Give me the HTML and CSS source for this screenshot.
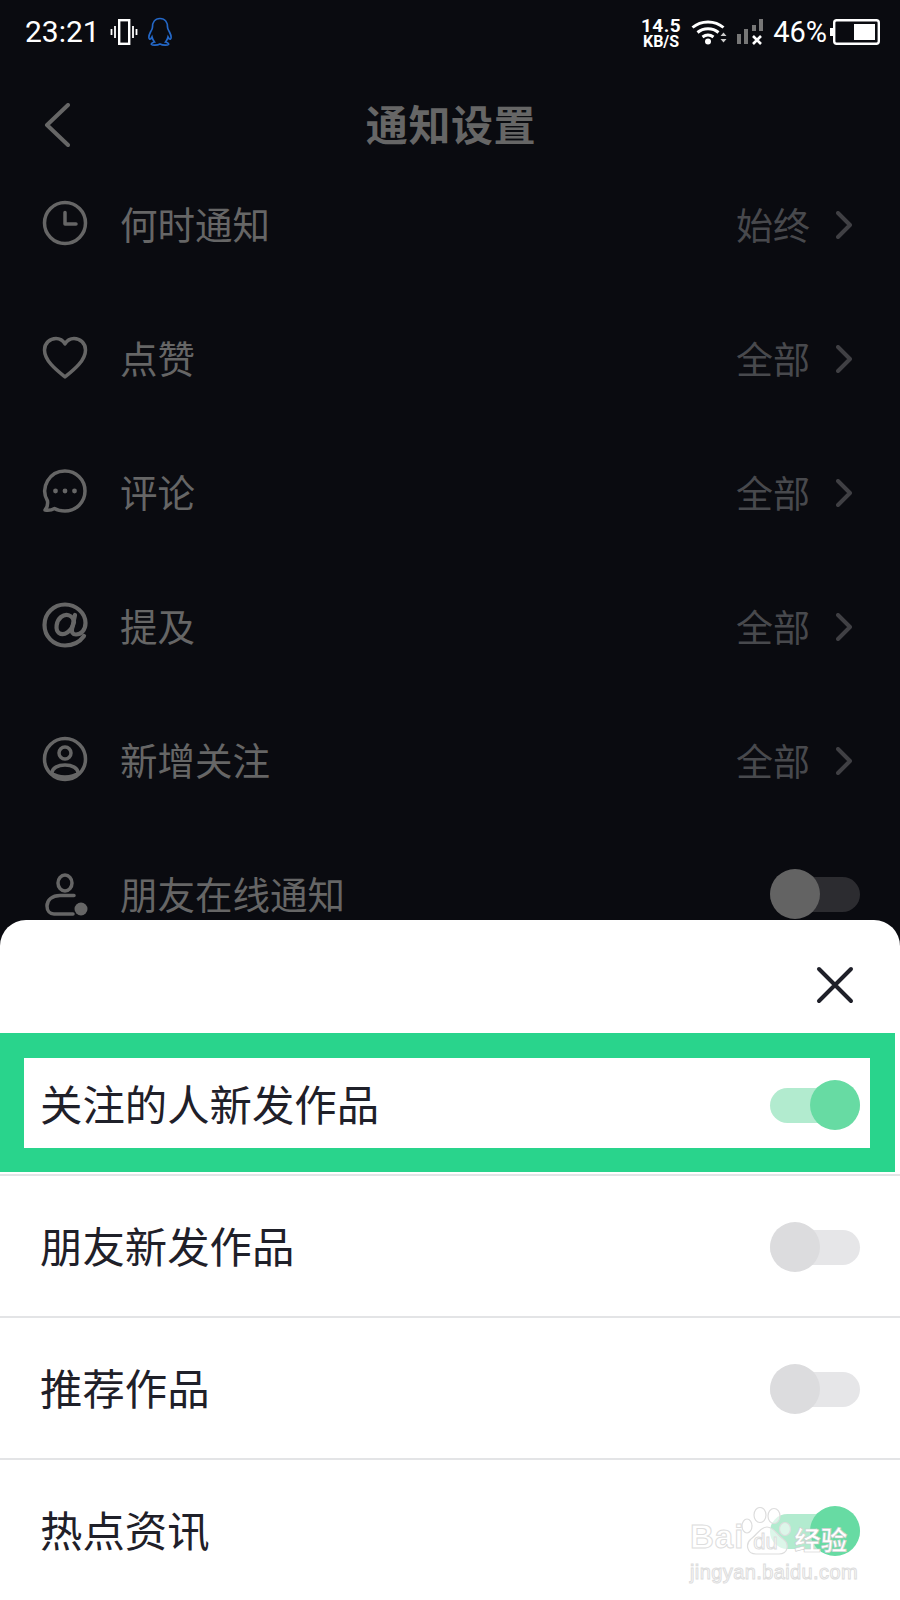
FILE: index.html
```html
<!DOCTYPE html>
<html lang="zh-CN">
<head>
  <meta charset="UTF-8" />
  <meta name="viewport" content="width=device-width, initial-scale=1.0" />
  <title>通知设置</title>
  <link rel="stylesheet" href="styles.css">
</head>
<body>

  <div class="statusbar">
    <div class="status-left">
      <span class="time">23:21</span>
      <svg class="ic-vibrate" width="28" height="26" viewBox="0 0 28 26"><rect x="9.2" y="1.2" width="10" height="23.6" fill="none" stroke="#fff" stroke-width="2.4"/><path d="M5 7v12M1.500 10v6M23 7v12M26.500 10v6" stroke="#fff" stroke-width="1.800"/></svg>
      <svg class="ic-qq" width="26" height="30" viewBox="0 0 26 30"><path d="M13 1.500C7.500 1.500 5.500 6 5.500 10C5.500 12 4.500 13 3.500 15C2 18 1.500 21 2.500 22C3.500 22.500 4.500 21 5 20C5.500 22 6.500 24 7.500 25C5.500 25.500 4 26.500 4.500 27.500C5.500 28.500 10 28.500 13 27C16 28.500 20.500 28.500 21.500 27.500C22 26.500 20.500 25.500 18.500 25C19.500 24 20.500 22 21 20C21.500 21 22.500 22.500 23.500 22C24.500 21 24 18 22.500 15C21.500 13 20.500 12 20.500 10C20.500 6 18.500 1.500 13 1.500Z" fill="none" stroke="#2468c8" stroke-width="1.700"/></svg>
    </div>
    <div class="status-right">
      <div class="speed"><span>14.5</span><span class="speed-unit">KB/S</span></div>
      <svg class="ic-wifi" width="36" height="26" viewBox="0 0 36 26"><path d="M1.500 8.500C10 1 24 1 32.500 8.500M6.500 13.500C12.500 8.500 21.500 8.500 27.500 13.500M11.500 18C14.800 15.500 19.200 15.500 22.500 18" fill="none" stroke="#fff" stroke-width="3"/><circle cx="17" cy="22.500" r="3" fill="#fff"/><path d="M29.500 17h6l-3-3.500zM29.500 20h6l-3 3.500z" fill="#ccc"/></svg>
      <svg class="ic-signal" width="27" height="26" viewBox="0 0 27 26"><path d="M1 15h4v10H1zM8 10h4v15H8zM16 6h4v6h-4zM23 0h4v12h-4z" fill="#777"/><path d="M17 17l8 8M25 17l-8 8" stroke="#fff" stroke-width="2.600"/></svg>
      <span class="percent">46%</span>
      <svg class="ic-battery" width="50" height="26" viewBox="0 0 50 26"><path d="M0 9h3v8H0z" fill="#fff"/><rect x="4.200" y="1.200" width="44.600" height="23.600" rx="2.500" fill="none" stroke="#fff" stroke-width="2.400"/><rect x="24" y="5" width="21" height="16" fill="#fff"/></svg>
    </div>
  </div>

  <header class="nav">
    <svg class="nav-back" width="26" height="44" viewBox="0 0 26 44"><path d="M24 2L3 22l21 20" fill="none" stroke="#666" stroke-width="4" stroke-linecap="round" stroke-linejoin="round"/></svg>
    <h1>通知设置</h1>
  </header>

  <ul class="settings">
    <li class="setting">
      <svg class="setting-icon" viewBox="0 0 48 48"><circle cx="24" cy="24" r="20.500"/><path d="M24 13.500V25h11"/></svg>
      <span class="setting-name">何时通知</span>
      <span class="setting-value">始终</span>
      <svg class="chevron" width="16" height="28" viewBox="0 0 16 28"><path d="M2 2l12 12L2 26"/></svg>
    </li>
    <li class="setting">
      <svg class="setting-icon" viewBox="0 0 48 48"><path d="M24 44C16 37.500 3.500 28 3.500 17C3.500 10 9 5.500 15 5.500C19 5.500 22 7.500 24 11C26 7.500 29 5.500 33 5.500C39 5.500 44.500 10 44.500 17C44.500 28 32 37.500 24 44Z"/></svg>
      <span class="setting-name">点赞</span>
      <span class="setting-value">全部</span>
      <svg class="chevron" width="16" height="28" viewBox="0 0 16 28"><path d="M2 2l12 12L2 26"/></svg>
    </li>
    <li class="setting">
      <svg class="setting-icon" viewBox="0 0 48 48"><path d="M24 4A20 20 0 1 1 24 44C20 44 16 43 13.500 41.500C10 43.500 7 43.500 4 43C6 41 7 38 6.500 34A20 20 0 0 1 24 4Z"/><circle class="dot" cx="14.500" cy="24" r="2.400"/><circle class="dot" cx="24" cy="24" r="2.400"/><circle class="dot" cx="33.500" cy="24" r="2.400"/></svg>
      <span class="setting-name">评论</span>
      <span class="setting-value">全部</span>
      <svg class="chevron" width="16" height="28" viewBox="0 0 16 28"><path d="M2 2l12 12L2 26"/></svg>
    </li>
    <li class="setting">
      <svg class="setting-icon icon-at" viewBox="0 0 48 48"><path d="M43 35C38 42 31 44.500 24 44.500C12 44.500 3.500 35 3.500 24C3.500 12 13 3.500 24 3.500C35 3.500 44.500 12 44.500 22C44.500 29 40 33.500 35 33.500C31.500 33.500 30.500 31 31 28L34 14"/><path d="M33 21C32 14 25 12 20 16C15 20 14 29 18 32C23 35.500 31 30 33 21Z"/></svg>
      <span class="setting-name">提及</span>
      <span class="setting-value">全部</span>
      <svg class="chevron" width="16" height="28" viewBox="0 0 16 28"><path d="M2 2l12 12L2 26"/></svg>
    </li>
    <li class="setting">
      <svg class="setting-icon" viewBox="0 0 48 48"><circle cx="24" cy="24" r="20.500"/><circle cx="24" cy="18" r="6"/><path d="M11 38C11 33 17 30 24 30C31 30 37 33 37 38C34 41 30 42 24 42C18 42 14 41 11 38Z"/></svg>
      <span class="setting-name">新增关注</span>
      <span class="setting-value">全部</span>
      <svg class="chevron" width="16" height="28" viewBox="0 0 16 28"><path d="M2 2l12 12L2 26"/></svg>
    </li>
    <li class="setting">
      <svg class="setting-icon" viewBox="0 0 48 48"><ellipse cx="24" cy="14" rx="7" ry="8"/><path d="M33 26.500H19C11 26.500 6 31 6 37C6 42 9 45 13 45H32"/><circle class="dot" cx="40" cy="40" r="6.500"/></svg>
      <span class="setting-name">朋友在线通知</span>
      <span class="toggle toggle-dim"><span class="toggle-thumb"></span></span>
    </li>
  </ul>

  <section class="sheet">
    <div class="sheet-head">
      <svg width="38" height="38" viewBox="0 0 38 38"><path d="M3 3l32 32M35 3L3 35" stroke="#1f2029" stroke-width="4" stroke-linecap="round"/></svg>
    </div>
    <div class="highlight">
      <span class="sheet-name">关注的人新发作品</span>
      <span class="toggle toggle-on"><span class="toggle-thumb"></span></span>
    </div>
    <div class="sheet-row">
      <span class="sheet-name">朋友新发作品</span>
      <span class="toggle"><span class="toggle-thumb"></span></span>
    </div>
    <div class="sheet-row">
      <span class="sheet-name">推荐作品</span>
      <span class="toggle"><span class="toggle-thumb"></span></span>
    </div>
    <div class="sheet-row sheet-row-last">
      <span class="sheet-name">热点资讯</span>
      <span class="toggle toggle-on"><span class="toggle-thumb"></span></span>
    </div>
  </section>

  <div class="watermark">
    <div class="wm-top">
      <span class="wm-bai">Bai</span>
      <span class="wm-paw">
        <svg width="56" height="50" viewBox="0 0 56 50"><g fill="#fff" fill-opacity=".55" stroke="#ddd" stroke-width="1.200"><ellipse cx="6" cy="19" rx="5" ry="7"/><ellipse cx="19" cy="8" rx="6" ry="7.500"/><ellipse cx="33" cy="9" rx="6" ry="7.500"/><ellipse cx="44" cy="22" rx="5.500" ry="6.500"/><path d="M26 20C19 20 16 28 10 32C4 37 6 47 15 47H38C47 47 49 37 42 32C36 28 33 20 26 20Z"/></g></svg>
        <span class="wm-du">du</span>
      </span>
      <span class="wm-jy">经验</span>
    </div>
    <div class="wm-url">jingyan.baidu.com</div>
  </div>

</body>
</html>
```

FILE: styles.css
```css
* { box-sizing: border-box; }
html, body { margin: 0; padding: 0; }
body {
  position: relative;
  width: 900px;
  height: 1600px;
  overflow: hidden;
  background-color: #0a0b10;
  font-family: 'Noto Sans CJK SC', 'Noto Sans', sans-serif;
  color: #666;
}

.statusbar { display: flex; justify-content: space-between; align-items: center; height: 64px; padding: 0 20px 0 25px; color: #fff; font-family: Roboto, sans-serif; }
.status-left, .status-right { display: flex; align-items: center; }
.time { font-size: 30px; line-height: 1; margin-right: 10px; }
.ic-vibrate { margin-right: 9px; }
.speed { display: flex; flex-direction: column; align-items: center; font-size: 19px; font-weight: 700; line-height: 19px; letter-spacing: .5px; margin-right: 10px; }
.speed-unit { font-size: 16px; line-height: 13px; letter-spacing: 0; }
.ic-wifi { margin-right: 9px; }
.ic-signal { margin-right: 10px; }
.percent { font-size: 29px; line-height: 1; margin-right: 3px; }

.nav { display: flex; justify-content: center; align-items: center; position: relative; height: 92px; padding: 26px 0 0 2px; }
.nav h1 { margin: 0; font-size: 42px; line-height: 62px; font-weight: 700; letter-spacing: .6px; color: #666; }
.nav-back { position: absolute; left: 44px; top: 39px; }

.settings { list-style: none; margin: 0; padding: 0; }
.setting { display: flex; align-items: center; height: 134px; padding: 0 40px 0 41px; }
.setting-icon { width: 48px; height: 48px; flex: none; margin-right: 31px; fill: none; stroke: #666; stroke-width: 3.500; stroke-linecap: round; stroke-linejoin: round; overflow: visible; }
.setting-icon .dot { fill: #666; stroke: none; }
.icon-at { stroke-width: 4.200; }
.setting-name { flex: 1; font-size: 37.500px; line-height: 54px; }
.setting-value { font-size: 37px; line-height: 54px; color: #48494d; margin-top: 2px; margin-right: 26px; }
.chevron { margin-top: 4px; margin-right: 8px; fill: none; stroke: #404044; stroke-width: 4; stroke-linecap: round; stroke-linejoin: round; }

.toggle { position: relative; display: block; flex: none; width: 90px; height: 35px; border-radius: 18px; background: #e6e6e8; }
.toggle-thumb { position: absolute; left: 0; top: -8px; width: 50px; height: 50px; border-radius: 50%; background: #dcdcde; }
.toggle-dim { margin-top: 2px; background: #2c2c30; }
.toggle-dim .toggle-thumb { background: #636363; }
.toggle-on { background: #b2ebcf; }
.toggle-on .toggle-thumb { left: 40px; background: #67dba3; }

.sheet { position: absolute; left: 0; right: 0; top: 920px; bottom: 0; background: #fff; border-radius: 26px 26px 0 0; color: #1f2029; }
.sheet-head { display: flex; justify-content: flex-end; align-items: flex-start; height: 113px; padding: 46px 46px 0 0; }
.sheet-name { font-size: 42.400px; line-height: 60px; }
.highlight { display: flex; justify-content: space-between; align-items: center; width: 895px; height: 139px; padding: 0 10px 0 16px; border: 25px solid #29d48c; border-left-width: 24px; border-bottom-width: 24px; margin-bottom: 2px; }
.highlight .toggle { margin-top: 4px; }
.sheet-row { display: flex; justify-content: space-between; align-items: center; height: 142px; padding: 0 40px 0 40px; border-top: 2px solid #e3e4e6; }
.sheet-row .sheet-name { margin-top: -2px; }
.sheet-row .toggle { margin-top: 2px; }
.sheet-row-last { height: 142px; }

.watermark { position: absolute; left: 690px; top: 1503px; width: 165px; color: #fff; }
.wm-top { display: flex; align-items: flex-end; height: 54px; }
.wm-bai, .wm-du, .wm-url { font-family: 'Liberation Sans', 'Noto Sans CJK SC', sans-serif; color: rgba(255,255,255,.6); -webkit-text-stroke: 1px #ddd; }
.wm-bai { font-size: 33px; line-height: 40px; font-weight: 700; letter-spacing: 1px; }
.wm-paw { position: relative; display: block; width: 56px; height: 50px; margin-left: -3px; }
.wm-du { position: absolute; left: 12px; bottom: 2px; font-size: 22px; line-height: 26px; }
.wm-jy { font-family: 'Noto Sans CJK SC', sans-serif; font-size: 26.500px; line-height: 36px; font-weight: 700; margin-left: -3px; color: #fff; -webkit-text-stroke: .6px #ccc; }
.wm-url { margin-top: 4px; font-size: 20px; line-height: 22px; letter-spacing: .4px; white-space: nowrap; }
```
